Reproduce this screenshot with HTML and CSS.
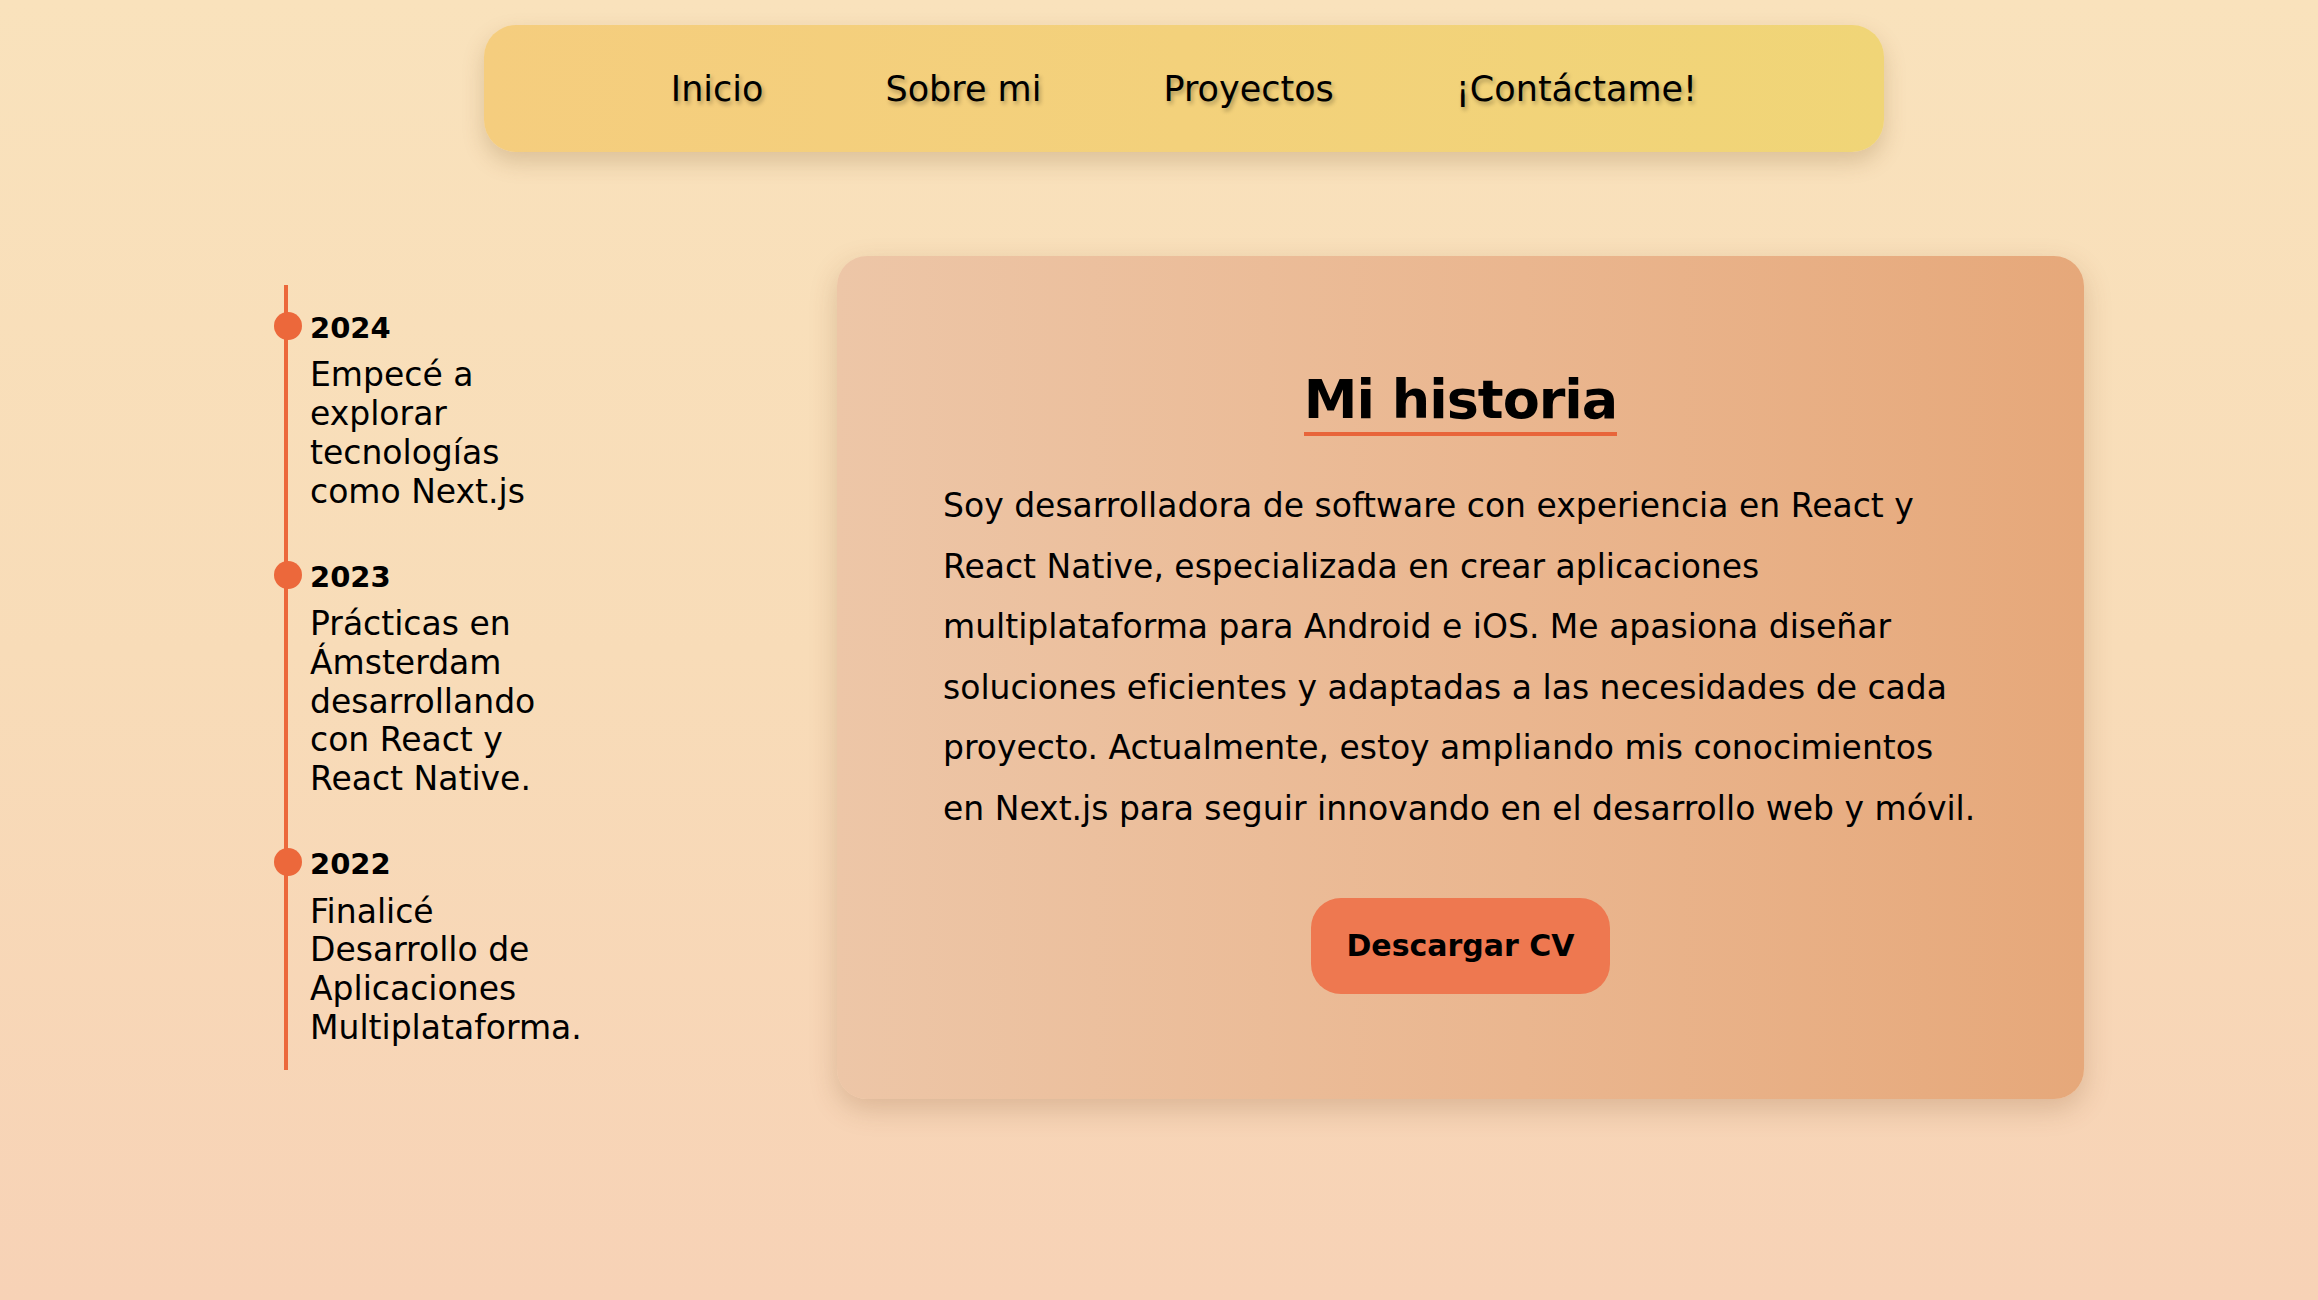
FILE: index.html
```html
<!DOCTYPE html>
<html lang="es">
<head>
<meta charset="utf-8">
<title>Sobre mi</title>
<link rel="stylesheet" href="styles.css">
</head>
<body>
<header class="header">
  <nav class="nav">
    <a class="nav-link" href="#">Inicio</a>
    <a class="nav-link" href="#">Sobre mi</a>
    <a class="nav-link" href="#">Proyectos</a>
    <a class="nav-link" href="#">¡Contáctame!</a>
  </nav>
</header>
<main class="main">
  <ol class="timeline">
    <li class="tl-item">
      <span class="tl-dot"></span>
      <h3 class="tl-year">2024</h3>
      <p class="tl-text">Empecé a explorar tecnologías como Next.js</p>
    </li>
    <li class="tl-item">
      <span class="tl-dot"></span>
      <h3 class="tl-year">2023</h3>
      <p class="tl-text">Prácticas en Ámsterdam desarrollando con React y React Native.</p>
    </li>
    <li class="tl-item">
      <span class="tl-dot"></span>
      <h3 class="tl-year">2022</h3>
      <p class="tl-text">Finalicé Desarrollo de Aplicaciones Multiplataforma.</p>
    </li>
  </ol>
  <section class="card">
    <h1 class="card-title">Mi historia</h1>
    <p class="card-text">Soy desarrolladora de software con experiencia en React y React Native, especializada en crear aplicaciones multiplataforma para Android e iOS. Me apasiona diseñar soluciones eficientes y adaptadas a las necesidades de cada proyecto. Actualmente, estoy ampliando mis conocimientos en Next.js para seguir innovando en el desarrollo web y móvil.</p>
    <a class="btn" href="#">Descargar CV</a>
  </section>
</main>
</body>
</html>
```

FILE: styles.css
```css
* { box-sizing: border-box; }

html, body {
  margin: 0;
  padding: 0;
}

body {
  min-height: 1300px;
  background: linear-gradient(180deg, #f9e2bc 0%, #f8dcb8 50%, #f7d2b6 100%);
  font-family: "DejaVu Sans", "Noto Sans", sans-serif;
  color: #000;
  overflow: hidden;
}

.header {
  padding-top: 25px;
  padding-left: 484px;
}

.nav {
  width: 1400px;
  height: 127px;
  border-radius: 32px;
  background: linear-gradient(90deg, #f5cd7e 0%, #f3d17b 50%, #f0d577 100%);
  box-shadow: 0 10px 22px rgba(120, 80, 30, 0.22);
  display: flex;
  align-items: center;
  justify-content: center;
  gap: 122px;
}

.nav-link {
  font-size: 35px;
  color: #000;
  text-decoration: none;
  text-shadow: 2px 3px 4px rgba(0, 0, 0, 0.28);
}

.main {
  display: flex;
  align-items: center;
  padding-left: 284px;
  margin-top: 104px;
}

.timeline {
  position: relative;
  list-style: none;
  margin: 0;
  width: 553px;
  padding: 25px 0 22px 0;
}

.timeline::before {
  content: "";
  position: absolute;
  left: 0;
  top: 0;
  bottom: 0;
  width: 4px;
  background: #ec683b;
}

.tl-item {
  position: relative;
  padding-left: 26px;
  margin-bottom: 47px;
}

.tl-item:last-child {
  margin-bottom: 0;
}

.tl-dot {
  position: absolute;
  left: -10px;
  top: 2px;
  width: 28px;
  height: 28px;
  border-radius: 50%;
  background: #ec683b;
}

.tl-year {
  margin: 0;
  font-size: 29px;
  line-height: 36px;
  font-weight: 700;
}

.tl-text {
  margin: 10.5px 0 0 0;
  width: 282px;
  font-size: 33px;
  line-height: 38.8px;
}

.card {
  width: 1247px;
  border-radius: 30px;
  background: linear-gradient(90deg, #edc6a7 0%, #eab68f 55%, #e6a87a 100%);
  box-shadow: 0 10px 28px rgba(120, 70, 30, 0.22);
  padding: 112px 106px 105px 106px;
  display: flex;
  flex-direction: column;
  align-items: center;
}

.card-title {
  margin: 0;
  font-size: 54px;
  line-height: 64px;
  font-weight: 700;
  letter-spacing: -1px;
  border-bottom: 4px solid #e8653a;
}

.card-text {
  margin: 40px 0 0 0;
  align-self: stretch;
  font-size: 33px;
  line-height: 60.6px;
}

.btn {
  margin-top: 58px;
  width: 299px;
  height: 96px;
  border-radius: 30px;
  background: #ee7850;
  color: #000;
  text-decoration: none;
  font-size: 30px;
  font-weight: 700;
  display: flex;
  align-items: center;
  justify-content: center;
}
```
